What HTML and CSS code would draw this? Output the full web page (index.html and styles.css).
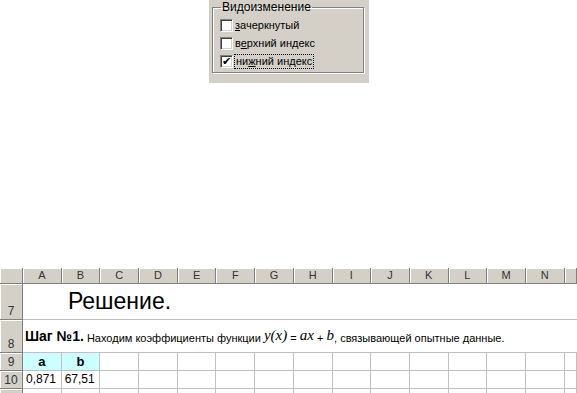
FILE: index.html
```html
<!DOCTYPE html>
<html lang="ru">
<head>
<meta charset="UTF-8" />
<title>Видоизменение и Решение</title>
<link rel="stylesheet" href="styles.css">
</head>
<body>

<!-- Font dialog fragment -->
<div class="dialog">
  <fieldset class="group">
    <legend>Видоизменение</legend>
    <label class="opt"><span class="box"></span><span><u>з</u>ачеркнутый</span></label>
    <label class="opt"><span class="box"></span><span>в<u>е</u>рхний индекс</span></label>
    <label class="opt"><span class="box checked">&#10004;</span><span class="focus">ни<u>ж</u>ний индекс</span></label>
  </fieldset>
</div>

<!-- Spreadsheet fragment -->
<div class="sheet">
  <div class="corner"></div>
  <div class="colhead">A</div><div class="colhead">B</div><div class="colhead">C</div>
  <div class="colhead">D</div><div class="colhead">E</div><div class="colhead">F</div>
  <div class="colhead">G</div><div class="colhead">H</div><div class="colhead">I</div>
  <div class="colhead">J</div><div class="colhead">K</div><div class="colhead">L</div>
  <div class="colhead">M</div><div class="colhead">N</div><div class="colhead"></div>

  <div class="rowhead">7</div>
  <div class="wide title">Решение.</div>

  <div class="rowhead">8</div>
  <div class="wide step"><b>Шаг №1.</b> Находим коэффициенты функции <span class="math">y</span><span class="math">(x)</span> = <span class="math">ax</span> + <span class="math">b</span>, связывающей опытные данные.</div>

  <div class="rowhead">9</div>
  <div class="cell hl bold">a</div><div class="cell hl bold">b</div>
  <div class="cell"></div><div class="cell"></div><div class="cell"></div><div class="cell"></div>
  <div class="cell"></div><div class="cell"></div><div class="cell"></div><div class="cell"></div>
  <div class="cell"></div><div class="cell"></div><div class="cell"></div><div class="cell"></div>
  <div class="cell"></div>

  <div class="rowhead">10</div>
  <div class="cell num">0,871</div><div class="cell num">67,51</div>
  <div class="cell"></div><div class="cell"></div><div class="cell"></div><div class="cell"></div>
  <div class="cell"></div><div class="cell"></div><div class="cell"></div><div class="cell"></div>
  <div class="cell"></div><div class="cell"></div><div class="cell"></div><div class="cell"></div>
  <div class="cell"></div>

  <div class="rowhead"></div>
  <div class="cell"></div><div class="cell"></div><div class="cell"></div><div class="cell"></div>
  <div class="cell"></div><div class="cell"></div><div class="cell"></div><div class="cell"></div>
  <div class="cell"></div><div class="cell"></div><div class="cell"></div><div class="cell"></div>
  <div class="cell"></div><div class="cell"></div><div class="cell"></div>
</div>

</body>
</html>
```

FILE: styles.css
```css
/* Reset */
* {
  box-sizing: border-box;
}
body {
  margin: 0;
  background: #fff;
  font-family: 'Liberation Sans', Arial, sans-serif;
  color: #000;
  overflow: hidden;
  width: 577px;
  height: 393px;
}

/* Dialog */
.dialog {
  width: 160px;
  height: 83px;
  margin-left: 209px;
  background: #d4d0c8;
  padding: 1px 5px 0 3px;
}
.group {
  margin: 0;
  height: 72px;
  padding: 3px 0 0 7px;
  border: 1px solid #808080;
  box-shadow: inset 1px 1px 0 #fff, 1px 1px 0 #fff;
  font-size: 11px;
}
.group legend {
  padding: 0 1px;
  margin-left: 1px;
  font-size: 12px;
  line-height: 12px;
}
.opt {
  display: flex;
  align-items: center;
  gap: 2px;
  height: 18px;
  line-height: 13px;
}
.box {
  width: 13px;
  height: 13px;
  background: #fff;
  border-top: 1px solid #808080;
  border-left: 1px solid #808080;
  border-right: 1px solid #fff;
  border-bottom: 1px solid #fff;
  box-shadow: inset 1px 1px 0 #404040, inset -1px -1px 0 #d4d0c8;
  font-size: 11px;
  font-weight: bold;
  line-height: 11px;
  text-align: center;
  font-family: 'DejaVu Sans', sans-serif;
}
.focus {
  outline: 1px dotted #000;
  outline-offset: 0;
  padding: 0 1px;
}

/* Sheet grid */
.sheet {
  margin-top: 185px;
  display: grid;
  grid-template-columns: 23px repeat(14, 38.7px) 1fr;
  grid-template-rows: 16px 36px 33px 18px 18px 18px;
  font-size: 11px;
}
.corner, .colhead, .rowhead {
  background: #d4d0c8;
  border-right: 1px solid #808080;
  border-bottom: 1px solid #808080;
  box-shadow: inset 1px 1px 0 #fff;
  color: #333;
}
.colhead {
  text-align: center;
  line-height: 15px;
}
.rowhead {
  display: flex;
  align-items: flex-end;
  justify-content: center;
  padding-bottom: 1px;
  font-size: 12px;
}
.cell {
  border-right: 1px solid #c0c0c0;
  border-bottom: 1px solid #c0c0c0;
  line-height: 17px;
}
.wide {
  grid-column: 2 / -1;
  border-bottom: 1px solid #c0c0c0;
}
.title {
  font-size: 23px;
  padding-left: 45px;
  line-height: 34px;
}
.step {
  display: flex;
  align-items: flex-end;
  white-space: pre;
  padding: 0 0 8px 2px;
  font-size: 11px;
}
.step b {
  font-size: 14px;
}
.math {
  font-family: 'Liberation Serif', serif;
  font-style: italic;
  font-size: 15px;
}
.hl {
  background: #ccffff;
}
.bold {
  font-weight: bold;
  font-size: 13px;
  text-align: center;
}
.num {
  padding-left: 3px;
  font-size: 12px;
}
```
